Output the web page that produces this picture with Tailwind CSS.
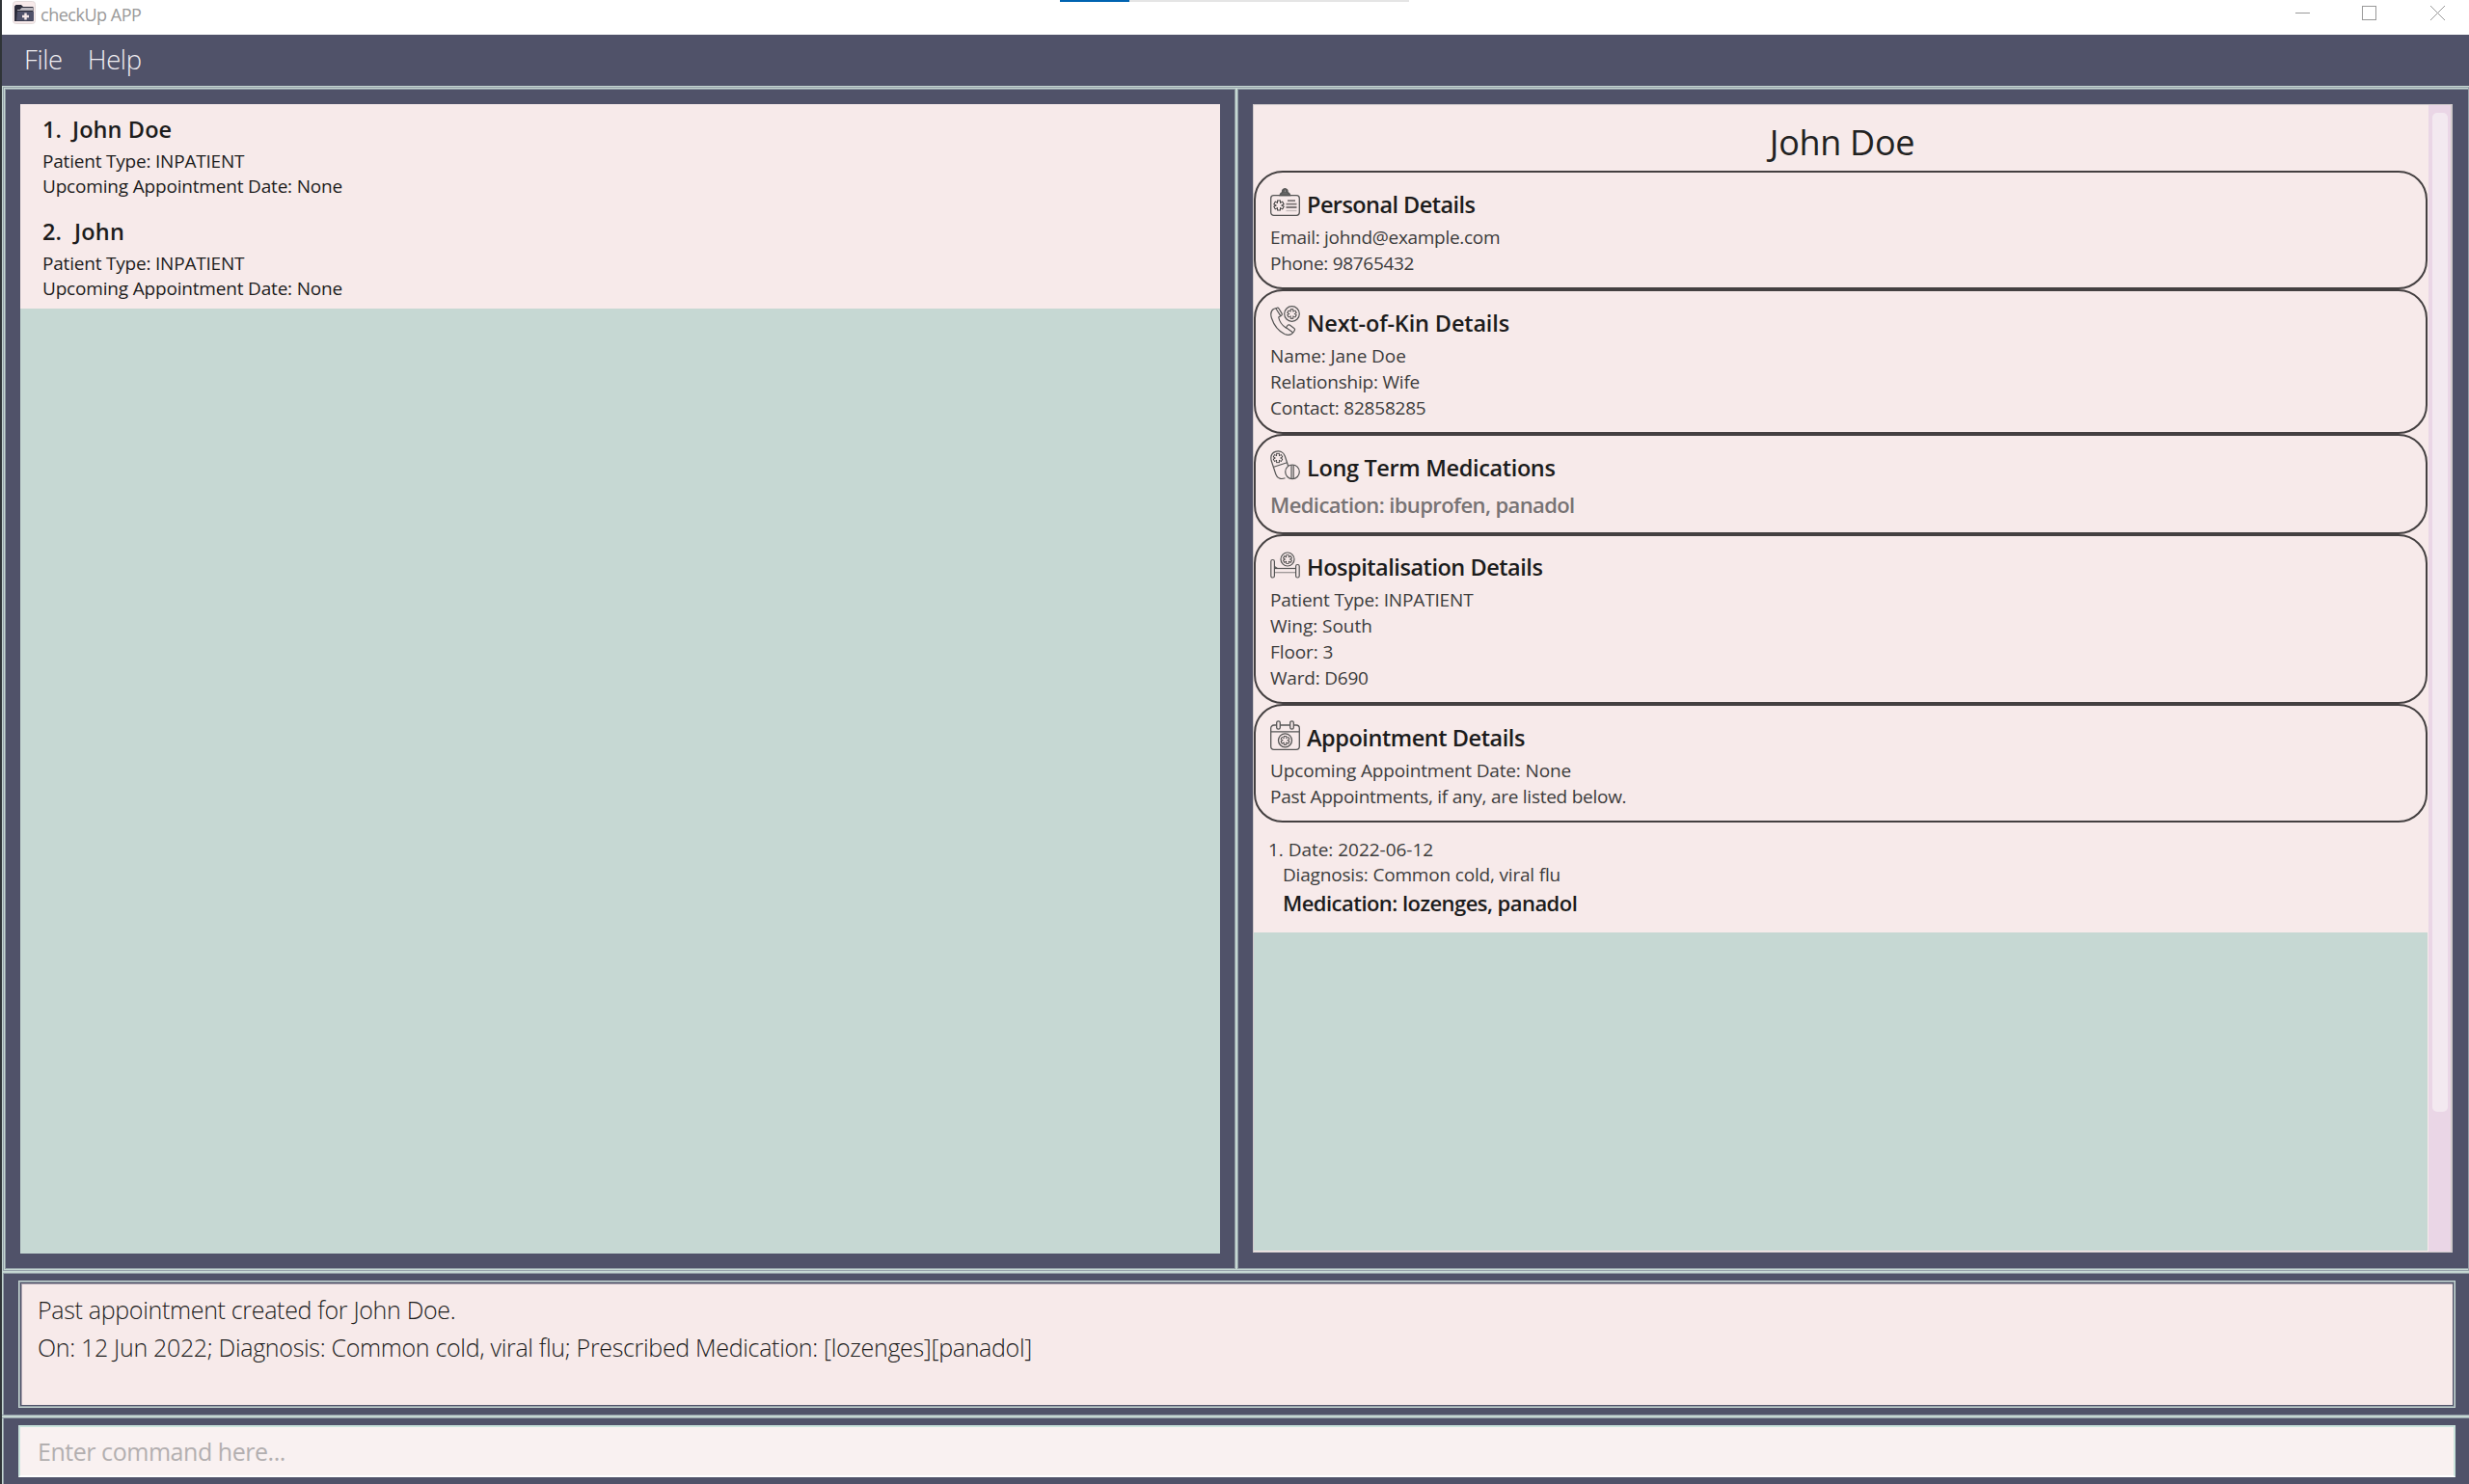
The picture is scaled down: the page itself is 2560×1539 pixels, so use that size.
<!DOCTYPE html>
<html lang="en">
<head>
<meta charset="utf-8">
<title>checkUp APP</title>
<script src="https://cdn.jsdelivr.net/npm/@tailwindcss/browser@4"></script>
</head>
<body class="w-[2560px] h-[1539px] overflow-hidden bg-[#505269] font-['Open_Sans',sans-serif] whitespace-nowrap">
<svg class="hidden">
  <symbol id="star" viewBox="0 0 12 12">
    <g fill="none" stroke-linecap="butt">
      <path d="M6 .4V11.6M1.1 3.2L10.900 8.800M10.900 3.200L1.100 8.800" stroke="#3a3a3a" stroke-width="3.900"/>
      <path d="M6 1.400V10.600M2 3.700L10 8.300M10 3.700L2 8.300" stroke="#f7eaea" stroke-width="2.100"/>
    </g>
  </symbol>
</svg>
<div class="flex flex-col h-[1539px] border-l-2 border-[#2f3437]">

  <!-- title bar -->
  <header class="relative flex h-9 shrink-0 bg-white pl-[11px]">
    <svg class="mt-px size-6 shrink-0" viewBox="0 0 24 24">
      <rect x=".5" y=".5" width="23" height="23" rx="3" fill="#f7eaea" stroke="#e3dada"/>
      <path d="M2 21V5.500L3.500 4H9l2 2h10.500v15z" fill="#2b2c3a"/>
      <path d="M5 9h2.500L9.500 7H21v3H5z" fill="#b9b6bd"/>
      <path d="M4 20.500L5 11h17v9.500z" fill="#50526a"/>
      <path d="M13.500 12.500v7M10 16h7" stroke="#f7eaea" stroke-width="2.400"/>
    </svg>
    <span class="ml-[5px] h-[30px] leading-[30px] text-[18px] tracking-[-0.48px] text-[#999]">checkUp APP</span>
    <div class="absolute left-[1097px] top-0 flex h-[2px] w-[362px] bg-[#e5e5e5]"><div class="w-[72px] bg-[#0063b1]"></div></div>
    <div class="absolute right-[25px] top-[6px] flex gap-[54px]">
      <svg class="h-[15px] w-[15px]" viewBox="0 0 15 15"><path d="M0 7.500H15" stroke="#999"/></svg>
      <svg class="h-[15px] w-[15px]" viewBox="0 0 15 15"><rect x=".5" y=".5" width="14" height="14" fill="none" stroke="#999"/></svg>
      <svg class="ml-[2px] h-[15px] w-[15px]" viewBox="0 0 15 15"><path d="M0 0L15 15M15 0L0 15" stroke="#999"/></svg>
    </div>
  </header>

  <!-- menu bar -->
  <nav class="flex h-[53px] shrink-0 items-center gap-[26px] pb-px pl-[23px] text-[27.5px] font-light tracking-[-0.4px] text-[#f0eef2]"><span>File</span><span>Help</span></nav>

  <!-- main split -->
  <main class="h-[1232px] shrink-0 border-l border-t border-[#c6d8d3] flex flex-col">
    <div class="flex-1 min-h-0 border-l border-t border-r border-b border-[#949fa8]">
      <div class="flex h-full border-l border-t border-b border-[#c6d8d3]">
        <section class="w-[1276px] shrink-0 border border-[#8f9ba3] pl-[15px] pt-[15px]">
          <div class="h-[1192px] w-[1244px] bg-[#c6d8d3]">
            <article class="h-[106px] bg-[#f7eaea] pl-[22px] pt-[8px] text-[#1c1c1c]">
              <h2 class="flex h-[38px] items-center text-[23.5px] font-semibold"><span class="w-[32px] pl-px">1.</span><span class="tracking-[0.1px]">John Doe</span></h2>
              <p class="h-[26.300px] pl-px text-[19px] leading-[26.300px] tracking-[-0.2px]">Patient Type: INPATIENT</p>
              <p class="h-[26.300px] pl-px text-[19px] leading-[26.300px] tracking-[-0.18px]">Upcoming Appointment Date: None</p>
            </article>
            <article class="h-[106px] bg-[#f7eaea] pl-[22px] pt-[8px] text-[#1c1c1c]">
              <h2 class="flex h-[38px] items-center text-[23.5px] font-semibold"><span class="w-[34px] pl-px">2.</span><span class="tracking-[0.2px]">John</span></h2>
              <p class="h-[26.300px] pl-px text-[19px] leading-[26.300px] tracking-[-0.2px]">Patient Type: INPATIENT</p>
              <p class="h-[26.300px] pl-px text-[19px] leading-[26.300px] tracking-[-0.18px]">Upcoming Appointment Date: None</p>
            </article>
          </div>
        </section>
        <div class="w-[2px] bg-[#c6d8d3]"></div>
        <section class="flex-1 border-l border-t border-b border-[#8f9ba3] pl-[15px] pt-[15px]">
          <div class="flex h-[1191px] w-[1244px] border border-r-2 border-[#d0cacb] bg-[#f7eaea]">
            <div class="w-[1218px] bg-[#f7eaea] text-[19px] tracking-[-0.21px] text-[#3c3c3c]">
              <h1 class="h-[68px] pl-[2px] pt-[5px] text-center text-[36px] leading-[68px] tracking-[-0.3px] text-[#222]">John Doe</h1>

              <div class="h-[123px] w-[1217px] rounded-[30px] border-2 border-[#444041] pl-[15px] pt-[13px]">
                <h2 class="flex h-[41px] items-center gap-[7px] text-[23.5px] font-semibold tracking-[-0.56px] text-[#1c1c1c]">
                  <svg class="mb-[6px] size-[31px]" viewBox="0 0 31 31" fill="none" stroke="#555" stroke-width="1.300">
                    <rect x=".7" y="8.700" width="29.600" height="20.600" rx="3"/>
                    <path d="M10 8.500c.5-2 1.800-2.800 2.700-3a2.800 2.800 0 1 1 5.200 0c1 .2 2.300 1 2.800 3z" fill="#666"/><circle cx="15.300" cy="4" r="1.200" fill="#f7eaea"/>
                    <use href="#star" x="3" y="13" width="12" height="12"/>
                    <path d="M18 14.200h8M16.500 17.600h11M16.500 21h11" stroke-width="1.800" stroke="#7d7677"/><path d="M16.500 24.500h11" stroke-opacity=".3"/>
                  </svg><span class="pt-px">Personal Details</span></h2>
                <p class="h-[27px] leading-[27px] tracking-[-0.3px]">Email: johnd@example.com</p>
                <p class="h-[27px] leading-[27px] tracking-[-0.3px]">Phone: 98765432</p>
              </div>

              <div class="h-[150px] w-[1217px] rounded-[30px] border-2 border-[#444041] pl-[15px] pt-[13px]">
                <h2 class="flex h-[41px] items-center gap-[7px] text-[23.5px] font-semibold tracking-[-0.16px] text-[#1c1c1c]">
                  <svg class="mb-[6px] size-[31px]" viewBox="0 0 31 31" fill="none" stroke="#555" stroke-width="1.200">
                    <circle cx="22.500" cy="8.500" r="7.800"/>
                    <use href="#star" x="17" y="3" width="11" height="11"/>
                    <path d="M3.500 3.500C.5 5.500.2 9 1.500 13c2.300 7 7.500 13.500 13.500 16.500 4 1.600 7.500.6 9.500-2.500l.8-1.600c.5-1 .2-1.600-.5-2l-4.500-3.300c-1-.6-1.800-.3-2.300.4l-1.700 2.500C12.500 20.500 9.500 16 8.700 12l2.800-1.700c.8-.6 1-1.300.6-2.200L9 3c-.5-.8-1.300-1-2-.7z"/>
                    <path d="M5.800 2.800l5 7.800M16.500 22.800l7 5"/>
                  </svg><span class="pt-px">Next-of-Kin Details</span></h2>
                <p class="h-[27px] leading-[27px] tracking-[-0.08px]">Name: Jane Doe</p>
                <p class="h-[27px] leading-[27px]">Relationship: Wife</p>
                <p class="h-[27px] leading-[27px]">Contact: 82858285</p>
              </div>

              <div class="h-[104px] w-[1217px] rounded-[30px] border-2 border-[#444041] pl-[15px] pt-[13px]">
                <h2 class="flex h-[41px] items-center gap-[7px] text-[23.5px] font-semibold tracking-[-0.35px] text-[#1c1c1c]">
                  <svg class="mb-[6px] size-[31px]" viewBox="0 0 31 31" fill="none" stroke="#555" stroke-width="1.200">
                    <path d="M15.500 28.800c-4.500 1.500-8.300.2-9.700-4L1.200 10.800C.2 6.500 1.500 2.800 5.500 1.400s8.300.3 9.800 4.600l3.300 10"/>
                    <path d="M3.700 17.300L17.500 12.800"/>
                    <use href="#star" x="2.500" y="2.500" width="11" height="11"/>
                    <circle cx="23" cy="22.300" r="7.300"/><path d="M22 15v14.500M24.200 15v14.500"/>
                  </svg><span class="pt-px">Long Term Medications</span></h2>
                <p class="h-[34px] leading-[34px] text-[22px] font-semibold tracking-[-0.6px] text-[#777374]">Medication: ibuprofen, panadol</p>
              </div>

              <div class="h-[176px] w-[1217px] rounded-[30px] border-2 border-[#444041] pl-[15px] pt-[12px]">
                <h2 class="flex h-[41px] items-center gap-[7px] text-[23.5px] font-semibold tracking-[-0.47px] text-[#1c1c1c]">
                  <svg class="mb-[4px] size-[31px]" viewBox="0 0 31 31" fill="none" stroke="#555" stroke-width="1.200">
                    <rect x=".8" y="9.500" width="3.600" height="18.500" rx="1.800"/><rect x="26.600" y="14.500" width="3.600" height="13.500" rx="1.800"/>
                    <path d="M4.400 18.500h22.200"/><path d="M4.400 22.700h22.200" stroke-opacity=".6"/><path d="M4.400 16.500l3 2"/>
                    <circle cx="18" cy="9" r="7"/><use href="#star" x="12.800" y="3.800" width="10.400" height="10.400"/>
                  </svg><span class="pt-px">Hospitalisation Details</span></h2>
                <p class="h-[27px] leading-[27px] tracking-[-0.15px]">Patient Type: INPATIENT</p>
                <p class="h-[27px] leading-[27px] tracking-[-0.03px]">Wing: South</p>
                <p class="h-[27px] leading-[27px] tracking-[-0.1px]">Floor: 3</p>
                <p class="h-[27px] leading-[27px]">Ward: D690</p>
              </div>

              <div class="h-[123px] w-[1217px] rounded-[30px] border-2 border-[#444041] pl-[15px] pt-[13px]">
                <h2 class="flex h-[41px] items-center gap-[7px] text-[23.5px] font-semibold tracking-[-0.45px] text-[#1c1c1c]">
                  <svg class="mb-[6px] size-[31px]" viewBox="0 0 31 31" fill="none" stroke="#555" stroke-width="1.300">
                    <path d="M6.500 5H4a3.300 3.300 0 0 0-3.300 3.300V27A3.300 3.300 0 0 0 4 30.300h23a3.300 3.300 0 0 0 3.300-3.300V8.300A3.300 3.300 0 0 0 27 5h-2.500M10.500 5h10M.7 11.800h29.600"/>
                    <rect x="6.700" y=".8" width="3.600" height="8.400" rx="1.800"/><rect x="20.700" y=".8" width="3.600" height="8.400" rx="1.800"/>
                    <circle cx="15.500" cy="20.800" r="7"/><use href="#star" x="10.300" y="15.600" width="10.400" height="10.400"/>
                  </svg><span class="pt-px">Appointment Details</span></h2>
                <p class="h-[27px] leading-[27px] tracking-[-0.15px]">Upcoming Appointment Date: None</p>
                <p class="h-[27px] leading-[27px] tracking-[-0.26px]">Past Appointments, if any, are listed below.</p>
              </div>

              <div class="h-[114px] pl-[15px] pt-[15px]">
                <p class="h-[26px] leading-[26px] tracking-[-0.03px]">1. Date: 2022-06-12</p>
                <p class="h-[27px] leading-[27px] pl-[15px] tracking-[-0.18px]">Diagnosis: Common cold, viral flu</p>
                <p class="h-[30px] leading-[30px] pl-[15px] text-[22px] font-semibold tracking-[-0.54px] text-[#1c1c1c]">Medication: lozenges, panadol</p>
              </div>
              <div class="h-[330px] w-[1217px] bg-[#c6d8d3]"></div>
            </div>
            <div class="w-[23px] bg-[#ead6e6] pl-[4px] pt-[8px]"><div class="h-[1036px] w-[16px] rounded-[5px] bg-[#f3e9f0]"></div></div>
          </div>
        </section>
      </div>
    </div>
    <div class="h-[3px] shrink-0 border-b border-[#949fa8] bg-[#c6d8d3]"></div>
  </main>

  <!-- result display -->
  <section class="h-[146px] shrink-0 border-l border-[#c6d8d3] flex">
    <div class="flex-1 border-l border-[#949fa8] pl-[15px] pt-[7px]">
      <div class="h-[132px] w-[2527px] border border-[#c6d8d3]"><div class="h-full border border-[#949fa8]"><div class="h-full border border-[#505269]"><div class="h-full border-l border-t border-[#a9a1ae] bg-[#f7eaea] pl-[16px] pt-[7px] text-[25px] font-light leading-[39px] tracking-[-0.32px] text-[#1c1c1c]"><p>Past appointment created for John Doe.</p><p>On: 12 Jun 2022; Diagnosis: Common cold, viral flu; Prescribed Medication: [lozenges][panadol]</p></div></div></div></div>
    </div>
  </section>

  <div class="h-1 shrink-0 border-y border-[#949fa8] bg-[#c6d8d3]"></div>

  <!-- command box -->
  <section class="h-[68px] shrink-0 border-l border-[#c6d8d3] flex">
    <div class="flex-1 border-l border-[#949fa8] pl-[15px] pt-[7px]">
      <div class="flex h-[54px] w-[2527px] items-center border-2 border-b-white border-[#c8e2db] bg-[#f9f1f1] pl-[18px] pt-[2px] text-[25px] tracking-[-0.46px] text-[#b3afb0]">Enter command here...</div>
    </div>
  </section>
</div>
</body>
</html>
